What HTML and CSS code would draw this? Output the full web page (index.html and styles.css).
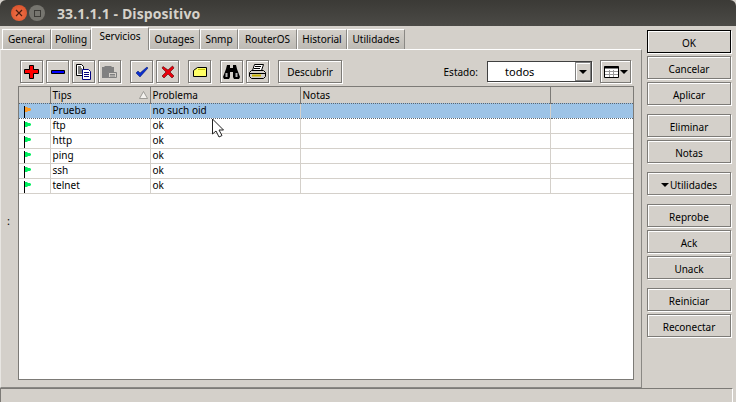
FILE: index.html
```html
<!DOCTYPE html>
<html lang="en">
<head>
    <meta charset="UTF-8">
    <title>33.1.1.1 - Dispositivo</title>
    <link rel="stylesheet" href="styles.css">
</head>
<body>
    <svg class="defs" width="0" height="0">
        <symbol id="flag" viewBox="0 0 12 12">
            <path d="M0 0h1v12H0z" fill="#000"/>
            <path d="M1 1h2l1 1h2l1 1v1L6 5H4L3 6H1z" fill="currentColor"/>
        </symbol>
    </svg>

    <div class="titlebar">
        <span class="wm-btn wm-close">
            <svg width="8" height="8" viewBox="0 0 8 8"><path d="M1 1l6 6M7 1L1 7" stroke="#4a1d10" stroke-width="1.2"/></svg>
        </span>
        <span class="wm-btn wm-max"><i></i></span>
        <span class="title">33.1.1.1 - Dispositivo</span>
    </div>

    <div class="main">
        <div class="left">
            <div class="tabs">
                <div class="tab tab-general">General</div>
                <div class="tab tab-polling">Polling</div>
                <div class="tab tab-active">Servicios</div>
                <div class="tab tab-outages">Outages</div>
                <div class="tab tab-snmp">Snmp</div>
                <div class="tab tab-router">RouterOS</div>
                <div class="tab tab-hist">Historial</div>
                <div class="tab tab-util">Utilidades</div>
            </div>

            <div class="panel">
                <div class="splitter">:</div>
                <div class="content">
                    <div class="toolbar">
                        <button class="btn tool">
                            <svg width="16" height="16" viewBox="0 0 16 16"><path d="M5.500 1.500h4v4h5v4h-5v5h-4v-5h-5v-4h5z" fill="#f00" stroke="#000"/></svg>
                        </button>
                        <button class="btn tool">
                            <svg width="16" height="16" viewBox="0 0 16 16"><path d="M1.500 6.500h13v3h-13z" fill="#00f" stroke="#000"/></svg>
                        </button>
                        <button class="btn tool">
                            <svg width="16" height="16" viewBox="0 0 16 16"><path d="M.5.500h5l2 2v9h-7z" fill="#fff" stroke="#000"/><path d="M2 3h3M2 5h4M2 7h4M2 9h4" stroke="#000"/><path d="M6.500 5.500h6l2 2v8h-8z" fill="#fff" stroke="#000080"/><path d="M8 8.500h5M8 10.500h5M8 12.500h5" stroke="#000080"/></svg>
                        </button>
                        <button class="btn tool tool-gap">
                            <svg width="17" height="16" viewBox="0 0 17 16"><path d="M1 3h2l1-1h6l1 1h2v11H1z" fill="#808080"/><path d="M7.500 8.500h8v5h-8z" fill="#d4d0ca" stroke="#808080"/><path d="M9 10.500h5M9 12h5" stroke="#808080"/></svg>
                        </button>
                        <button class="btn tool">
                            <svg width="16" height="16" viewBox="0 0 16 16"><path d="M2 9l2-2 2 2 7-6 1 1-8 9z" fill="#0a2fd0" stroke="#001060" stroke-width=".5"/></svg>
                        </button>
                        <button class="btn tool tool-gap">
                            <svg width="16" height="16" viewBox="0 0 16 16"><path d="M3 2.500l5 3.500 4.500-4 1.500 2-4 4 4 4-2 2-4-4-4 4-2-2 4-4-4-4z" fill="#e8000c" stroke="#500" stroke-width=".6"/></svg>
                        </button>
                        <button class="btn tool tool-gap">
                            <svg width="16" height="16" viewBox="0 0 16 16"><path d="M1.500 6.500l4-3h9v9h-13z" fill="#ff6" stroke="#000"/><path d="M6 5.500h7" stroke="#c8c800"/></svg>
                        </button>
                        <button class="btn tool">
                            <svg width="17" height="17" viewBox="0 0 17 17"><path d="M4 2h3v3h3V2h3l1 4 3 8-1 2h-5l-1-2V9H7v5l-1 2H1l-1-2 3-8z" fill="#000"/><path d="M2.500 10h2v4h-2zM12.500 10h2v4h-2z" fill="#b5b5b5"/></svg>
                        </button>
                        <button class="btn tool tool-gap">
                            <svg width="17" height="16" viewBox="0 0 17 16"><path d="M5.500 .5h9l-2 6h-9z" fill="#fff" stroke="#000"/><path d="M6 2.500h6M5 4.500h6" stroke="#000"/><path d="M2.500 6.500h12l2 2v4l-2 2h-12l-2-2v-4z" fill="#d4d0ca" stroke="#000"/><path d="M1 9.500h15" stroke="#000"/><path d="M3 11.500h9" stroke="#c8b400" stroke-width="2"/></svg>
                        </button>
                        <button class="btn discover">Descubrir</button>

                        <label class="estado-label">Estado:</label>
                        <div class="select">
                            <span class="select-value">todos</span>
                            <span class="select-arrow"><i class="arrow"></i></span>
                        </div>
                        <button class="btn columns">
                            <svg width="15" height="12" viewBox="0 0 15 12"><path d="M.5.500h14v11H.5z" fill="#fff" stroke="#000"/><path d="M.5 1.500h14" stroke="#000" stroke-width="2"/><path d="M1 5.500h13M1 8.500h13M5.500 4v7M9.500 4v7" stroke="#999"/></svg>
                            <i class="arrow"></i>
                        </button>
                    </div>

                    <div class="grid-wrap">
                        <table class="grid">
                            <colgroup>
                                <col class="c-flag"><col class="c-tips"><col class="c-problem"><col class="c-notes"><col>
                            </colgroup>
                            <thead>
                                <tr>
                                    <th></th>
                                    <th>Tips
                                        <svg class="sort" width="9" height="8" viewBox="0 0 9 8"><path d="M4.500 .5l4 7h-8z" fill="#f4f2ee" stroke="#8c8a86" stroke-width=".8"/></svg>
                                    </th>
                                    <th>Problema</th>
                                    <th>Notas</th>
                                    <th></th>
                                </tr>
                            </thead>
                            <tbody>
                                <tr class="selected">
                                    <td class="flag-cell flag-warn"><svg width="12" height="12"><use href="#flag"/></svg></td>
                                    <td>Prueba</td><td>no such oid</td><td></td><td></td>
                                </tr>
                                <tr>
                                    <td class="flag-cell"><svg width="12" height="12"><use href="#flag"/></svg></td>
                                    <td>ftp</td><td>ok</td><td></td><td></td>
                                </tr>
                                <tr>
                                    <td class="flag-cell"><svg width="12" height="12"><use href="#flag"/></svg></td>
                                    <td>http</td><td>ok</td><td></td><td></td>
                                </tr>
                                <tr>
                                    <td class="flag-cell"><svg width="12" height="12"><use href="#flag"/></svg></td>
                                    <td>ping</td><td>ok</td><td></td><td></td>
                                </tr>
                                <tr>
                                    <td class="flag-cell"><svg width="12" height="12"><use href="#flag"/></svg></td>
                                    <td>ssh</td><td>ok</td><td></td><td></td>
                                </tr>
                                <tr>
                                    <td class="flag-cell"><svg width="12" height="12"><use href="#flag"/></svg></td>
                                    <td>telnet</td><td>ok</td><td></td><td></td>
                                </tr>
                            </tbody>
                        </table>
                    </div>
                </div>
            </div>
        </div>

        <div class="side">
            <div class="side-group">
                <button class="btn side-btn btn-default">OK</button>
                <button class="btn side-btn">Cancelar</button>
                <button class="btn side-btn">Aplicar</button>
            </div>
            <div class="side-group">
                <button class="btn side-btn">Eliminar</button>
                <button class="btn side-btn">Notas</button>
            </div>
            <div class="side-group">
                <button class="btn side-btn"><i class="arrow arrow-menu"></i>Utilidades</button>
            </div>
            <div class="side-group">
                <button class="btn side-btn">Reprobe</button>
                <button class="btn side-btn">Ack</button>
                <button class="btn side-btn">Unack</button>
            </div>
            <div class="side-group">
                <button class="btn side-btn">Reiniciar</button>
                <button class="btn side-btn">Reconectar</button>
            </div>
        </div>
    </div>

    <div class="statusbar"></div>

    <!-- mouse pointer on top of the table -->
    <svg class="pointer" width="13" height="20" viewBox="0 0 13 20">
        <path d="M1.500 1v15l3.500-3 3 6 3-1.500-3-5.500h4.500z" fill="#fff" stroke="#222"/>
    </svg>
</body>
</html>
```

FILE: styles.css
```css
* {
    box-sizing: border-box;
}

html, body {
    height: 100%;
}

body {
    margin: 0;
    width: 736px;
    height: 402px;
    overflow: hidden;
    display: flex;
    flex-direction: column;
    background: #d4d0ca;
    font-family: "Noto Sans", sans-serif;
    font-size: 10px;
    color: #000;
    position: relative;
}

.defs {
    position: absolute;
}

/* Window title */
.titlebar {
    height: 26px;
    flex: none;
    display: flex;
    align-items: center;
    background: linear-gradient(to bottom, #3b3a36, #4b4a46);
    border-radius: 6px 6px 0 0;
    padding-left: 11px;
}

.wm-btn {
    width: 16px;
    height: 16px;
    border-radius: 50%;
    display: flex;
    align-items: center;
    justify-content: center;
    margin-right: 2px;
}

.wm-close {
    background: radial-gradient(circle at 50% 60%, #f0734a, #d44a24);
}

.wm-max {
    background: #76756f;
}

.wm-max i {
    width: 7px;
    height: 7px;
    border: 1px solid #3c3b37;
}

.title {
    margin-left: 10px;
    font-family: "Open Sans", sans-serif;
    font-weight: 700;
    font-size: 14px;
    color: #d6d2ca;
    letter-spacing: 0.1px;
}

.main {
    height: 362px;
    flex: none;
    display: flex;
}

.left {
    width: 642px;
    display: flex;
    flex-direction: column;
}

/* Tabs */
.tabs {
    height: 23px;
    flex: none;
    display: flex;
    align-items: flex-end;
    padding-left: 2px;
}

.tab {
    height: 20px;
    padding-top: 2px;
    text-align: center;
    line-height: 14px;
    border-top: 1px solid #fff;
    border-left: 1px solid #fff;
    border-right: 1px solid #8a8884;
    background: linear-gradient(to bottom, #d4d0ca, #bdbab4);
}

.tab-general { width: 49px; }
.tab-polling { width: 40px; }
.tab-outages { width: 51px; }
.tab-snmp { width: 38px; }
.tab-router { width: 59px; }
.tab-hist { width: 50px; }
.tab-util { width: 58px; }

.tab-active {
    width: 58px;
    height: 23px;
    padding-top: 1px;
    margin-bottom: -1px;
    position: relative;
    background: #d4d0ca;
}

.panel {
    flex: 1;
    display: flex;
    border-top: 1px solid #fff;
    border-right: 1px solid #8a8884;
    border-bottom: 1px solid #8a8884;
    border-left: 1px solid #e8e6e2;
    padding: 10px 7px 7px 0;
}

.splitter {
    width: 17px;
    display: flex;
    align-items: center;
    justify-content: center;
    padding-right: 2px;
    font-size: 11px;
}

.content {
    flex: 1;
    display: flex;
    flex-direction: column;
    min-width: 0;
}

/* Buttons */
.btn {
    font: inherit;
    color: #000;
    padding: 0;
    margin: 0;
    background: #d4d0ca;
    border: 1px solid #7c7a76;
    box-shadow: inset 1px 1px 0 #fff, 1px 1px 0 #fff;
    display: flex;
    align-items: center;
    justify-content: center;
}

.toolbar {
    height: 23px;
    flex: none;
    margin-bottom: 3px;
    padding-left: 2px;
    padding-right: 3px;
    display: flex;
    align-items: center;
    gap: 3px;
}

.tool {
    width: 23px;
    height: 23px;
}

.tool-gap {
    margin-right: 6px;
}

.discover {
    width: 64px;
    height: 23px;
}

.estado-label {
    margin-left: auto;
    margin-right: 6px;
}

.select {
    width: 105px;
    height: 21px;
    margin-right: 5px;
    display: flex;
    background: #fff;
    border: 1px solid #404040;
    box-shadow: 1px 1px 0 #fff;
}

.select-value {
    flex: 1;
    padding-left: 17px;
    line-height: 19px;
    font-size: 11px;
}

.select-arrow {
    width: 16px;
    background: #d4d0ca;
    border: 1px solid #808080;
    box-shadow: inset 1px 1px 0 #fff;
    display: flex;
    align-items: center;
    justify-content: center;
}

.arrow {
    width: 0;
    height: 0;
    border-left: 4px solid transparent;
    border-right: 4px solid transparent;
    border-top: 4px solid #000;
}

.columns {
    width: 31px;
    height: 23px;
    gap: 1px;
}

/* Services table */
.grid-wrap {
    flex: 1;
    background: #fff;
    border: 1px solid #7c7a76;
    overflow: hidden;
}

.grid {
    width: 100%;
    table-layout: fixed;
    border-collapse: collapse;
}

.c-flag { width: 31px; }
.c-tips { width: 100px; }
.c-problem { width: 150px; }
.c-notes { width: 250px; }

.grid th {
    height: 16px;
    padding: 0 0 0 2px;
    font-weight: 400;
    text-align: left;
    background: #d4d0ca;
    border-right: 1px solid #7c7a76;
    position: relative;
}

.grid th:last-child {
    border-right: 0;
}

.grid td {
    height: 15px;
    padding: 0 0 0 2px;
    line-height: 13px;
    vertical-align: top;
    border-right: 1px solid #d4d0ca;
    border-bottom: 1px solid #d4d0ca;
    white-space: nowrap;
}

.grid td:last-child {
    border-right: 0;
}

.grid .flag-cell {
    padding: 0 0 0 5px;
    color: #00f060;
}

.flag-cell svg {
    display: block;
    margin-top: 2px;
}

.grid .flag-warn {
    color: #ff9a1f;
}

.selected td {
    background: #9dc3e6;
    border-top: 1px dotted #5c6670;
    border-bottom: 1px dotted #5c6670;
}

.sort {
    position: absolute;
    right: 2px;
    top: 4px;
}

/* Right hand buttons */
.side {
    width: 84px;
    margin-left: 5px;
    padding-top: 4px;
    display: flex;
    flex-direction: column;
    gap: 9px;
}

.side-group {
    display: flex;
    flex-direction: column;
    gap: 3px;
}

.side-btn {
    height: 23px;
    padding-top: 2px;
}

.btn-default {
    border-color: #000;
}

.arrow-menu {
    margin-right: 1px;
}

.statusbar {
    flex: 1;
    margin-right: 3px;
    border-top: 1px solid #7c7a76;
    border-left: 1px solid #7c7a76;
    border-right: 1px solid #fff;
}

.pointer {
    position: absolute;
    left: 211px;
    top: 118px;
}
```
